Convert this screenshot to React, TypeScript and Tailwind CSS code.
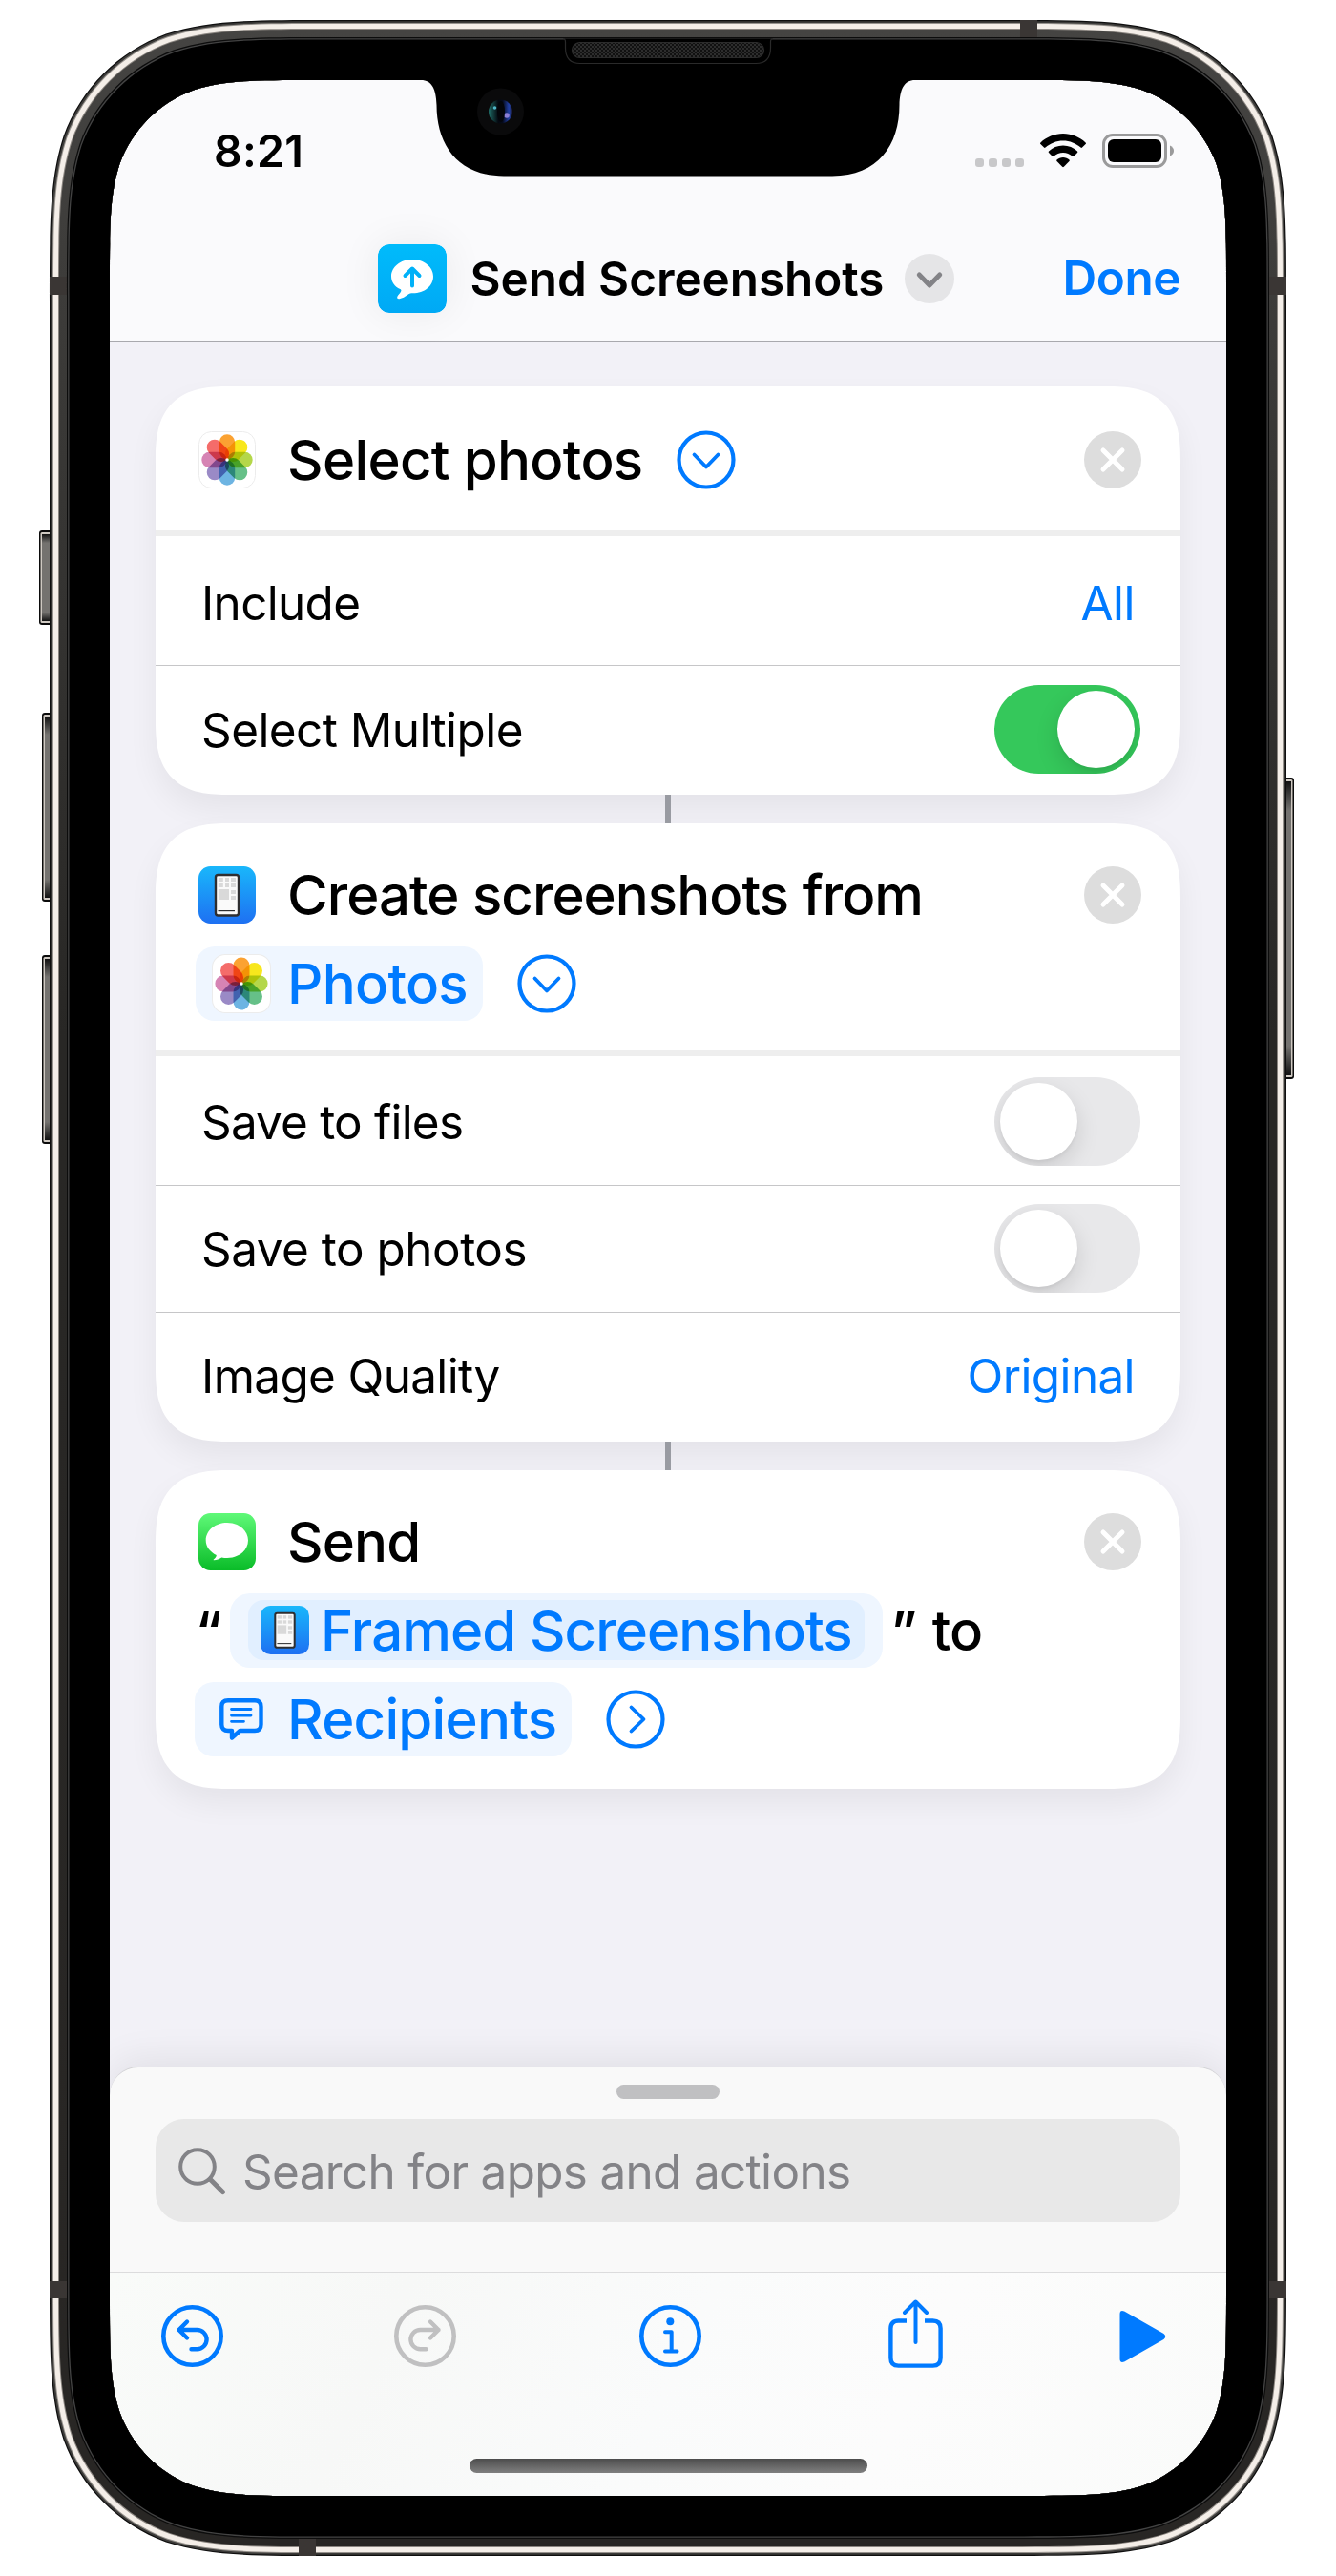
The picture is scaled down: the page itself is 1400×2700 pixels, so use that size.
import type { ReactNode } from "react";

const BLUE = "#007aff";

/* Path of a rectangle with continuous-curvature corners. */
function smoothRect(x: number, y: number, w: number, h: number, r: number) {
  const a: [number, number][] = [
    [1.52866, 0], [1.08849, 0], [0.86841, 0], [0.63149, 0.07491], [0.37282, 0.16906],
    [0.16906, 0.37282], [0.07491, 0.63149], [0, 0.86841], [0, 1.08849], [0, 1.52866],
  ];
  const b = [...a].reverse();
  const at = (p: [number, number], sx: number, sy: number) =>
    `${(sx > 0 ? x + p[0] * r : x + w - p[0] * r).toFixed(2)} ${(sy > 0 ? y + p[1] * r : y + h - p[1] * r).toFixed(2)}`;
  const corner = (pts: [number, number][], sx: number, sy: number) => {
    const s = pts.map((p) => at(p, sx, sy));
    return `L${s[0]} C${s[1]} ${s[2]} ${s[3]} C${s[4]} ${s[5]} ${s[6]} C${s[7]} ${s[8]} ${s[9]}`;
  };
  return `M${at(a[0], 1, 1)} ${corner(a, -1, 1)} ${corner(b, -1, -1)} ${corner(a, 1, -1)} ${corner(b, 1, 1)} Z`;
}

const SCREEN = smoothRect(115, 84, 1170, 2532, 139);

function ring(offset: number) {
  return `${smoothRect(52 + offset, 21 + offset, 1296 - 2 * offset, 2658 - 2 * offset, 193 - offset * 0.857)} ${SCREEN}`;
}

function SideButton({ x, y, w, h, flip }: { x: number; y: number; w: number; h: number; flip?: boolean }) {
  return (
    <g transform={flip ? `translate(${x + w} ${y}) scale(-1 1)` : `translate(${x} ${y})`}>
      <rect width={w + 4} height={h} rx="3" fill="#0b0b0b" />
      <rect x="1.5" y="2" width={w} height={h - 4} rx="1.5" fill="#cfc9c2" />
      <rect x="3" y="4" width={w} height={h - 8} fill="url(#btn)" />
    </g>
  );
}

function PhoneFrame() {
  return (
    <svg className="absolute inset-0 pointer-events-none" width="1400" height="2700" viewBox="0 0 1400 2700" fillRule="evenodd">
      <defs>
        <linearGradient id="band" x1="0" y1="0" x2="0" y2="1">
          <stop offset="0" stopColor="#454442" />
          <stop offset="0.1" stopColor="#3d3c3a" />
          <stop offset="0.4" stopColor="#282725" />
          <stop offset="1" stopColor="#282624" />
        </linearGradient>
        <linearGradient id="btn" x1="0" y1="0" x2="0" y2="1">
          <stop offset="0" stopColor="#111" />
          <stop offset="0.1" stopColor="#74726f" />
          <stop offset="0.9" stopColor="#74726f" />
          <stop offset="1" stopColor="#111" />
        </linearGradient>
        <pattern id="mesh" width="4" height="4" patternUnits="userSpaceOnUse">
          <rect width="4" height="4" fill="#111" />
          <circle cx="1" cy="1" r="0.9" fill="#3a3a3a" />
          <circle cx="3" cy="3" r="0.9" fill="#3a3a3a" />
        </pattern>
        <linearGradient id="lens" x1="0" y1="0" x2="1" y2="0">
          <stop offset="0" stopColor="#1f6d68" />
          <stop offset="0.4" stopColor="#04080f" />
          <stop offset="0.6" stopColor="#050a1c" />
          <stop offset="0.85" stopColor="#2140a8" />
          <stop offset="1" stopColor="#1c1c3a" />
        </linearGradient>
      </defs>
      <SideButton x={41} y={556} w={11} h={99} />
      <SideButton x={44} y={747} w={8} h={198} />
      <SideButton x={44} y={1001} w={8} h={198} />
      <SideButton x={1348} y={815} w={8} h={316} flip />
      <path d={ring(0)} fill="#0e0e0e" />
      <path d={ring(1.2)} fill="#3c3b39" />
      <path d={ring(3)} fill="#96928d" />
      <path d={ring(4)} fill="#f4eee8" />
      <path d={ring(9)} fill="#8b8681" />
      <path d={ring(10)} fill="url(#band)" />
      <g fill="#3a3634">
        <rect x="52" y="290" width="18" height="19" />
        <rect x="1330" y="290" width="18" height="19" />
        <rect x="52" y="2391" width="18" height="18" />
        <rect x="1330" y="2391" width="18" height="18" />
        <rect x="1069" y="21" width="18" height="18" />
        <rect x="313" y="2661" width="18" height="18" />
      </g>
      <path d={ring(18)} fill="#0c0c0c" />
      <path d={ring(19.2)} fill="#434343" />
      <path d={ring(20.5)} fill="#000" />
      <path d="M436 80 V84 H441 C453 84 457 94 457.5 110 C457.5 152 480 184.5 528 184.5 H872 C920 184.5 942.5 152 942.5 110 C943 94 947 84 959 84 H964 V80 Z" fill="#000" />
      <path d="M590 40.500 Q592.500 40.500 592.500 44 V50 Q592.500 66.500 608 66.500 H792 Q807.500 66.500 807.500 50 V44 Q807.500 40.500 810 40.500" fill="#000" stroke="#2a2a2a" strokeWidth="1.2" />
      <rect x="599.500" y="44.500" width="201" height="16" rx="8" fill="url(#mesh)" stroke="#2c2c2c" strokeWidth="1.2" />
      <circle cx="524.500" cy="117" r="24.500" fill="#0a0a0b" />
      <circle cx="524.500" cy="117" r="12.500" fill="url(#lens)" />
      <circle cx="518.500" cy="113" r="1.800" fill="#4fb6c8" />
      <circle cx="531" cy="121" r="2.800" fill="#8c7fd6" />
      <ellipse cx="525" cy="117" rx="4" ry="11" fill="#03050a" />
    </svg>
  );
}

function Wifi() {
  return (
    <svg width="48" height="36" viewBox="0 0 48 36" fill="#000">
      <path d="M24 0 C33 0 41.500 3.600 47.600 9.400 Q48.400 10.200 47.600 11 L44 14.600 Q43.300 15.300 42.500 14.600 C37.500 10 31 7.400 24 7.400 C17 7.400 10.500 10 5.500 14.600 Q4.700 15.300 4 14.600 L0.400 11 Q-0.400 10.200 0.400 9.400 C6.500 3.600 15 0 24 0 Z" />
      <path d="M24 12.600 C29.800 12.600 35 14.800 39 18.500 Q39.800 19.300 39 20.100 L35.300 23.700 Q34.600 24.400 33.800 23.700 C31.100 21.400 27.700 20 24 20 C20.300 20 16.900 21.400 14.200 23.700 Q13.400 24.400 12.700 23.700 L9 20.100 Q8.200 19.300 9 18.500 C13 14.800 18.200 12.600 24 12.600 Z" />
      <path d="M24 25 C26.500 25 28.800 26 30.500 27.500 Q31.200 28.200 30.500 29 L24.800 34.800 Q24 35.600 23.200 34.800 L17.500 29 Q16.800 28.200 17.500 27.500 C19.200 26 21.500 25 24 25 Z" />
    </svg>
  );
}

function Battery() {
  return (
    <svg width="76" height="36" viewBox="0 0 76 36">
      <rect x="1.500" y="1.500" width="65" height="33" rx="9.500" fill="none" stroke="#9a9a9b" strokeWidth="3" />
      <rect x="6" y="6" width="56" height="24" rx="6" fill="#000" />
      <path d="M71 12.500 Q75 14.500 75 18 Q75 21.500 71 23.500 Z" fill="#9a9a9b" />
    </svg>
  );
}

function ShortcutIcon() {
  return (
    <svg className="rounded-[12px] shadow-[0_0_44px_rgba(0,0,0,0.07)]" width="72" height="72" viewBox="0 0 72 72">
      <defs>
        <linearGradient id="sc" x1="0" y1="0" x2="0" y2="1">
          <stop offset="0" stopColor="#00bbfb" />
          <stop offset="1" stopColor="#00a9f5" />
        </linearGradient>
      </defs>
      <rect width="72" height="72" rx="12" fill="url(#sc)" />
      <path d="M36 16 C48.500 16 58 23.800 58 33.700 C58 43.800 48.500 51.400 36.500 51.300 C34.600 51.300 33.200 51.600 31.500 52.800 C28.500 55 25.500 56.800 22.500 57.200 C20 57.400 19.600 55.600 20.800 54 C22.500 52 24 50.600 24.400 48.800 C24.600 48 24 47.600 23.300 47.100 C17.500 44.200 14 39.500 14 33.700 C14 23.800 23.500 16 36 16 Z" fill="#fff" />
      <path d="M36 43.500 V26 M28.500 33 L36 25.500 L43.500 33" fill="none" stroke="#00b1f8" strokeWidth="4" strokeLinecap="round" strokeLinejoin="round" />
    </svg>
  );
}

const PETALS = ["#fba232", "#f8e71c", "#b4d74a", "#66c088", "#6db4e2", "#9a8ac6", "#d684b4", "#f46c6a"];

function PhotosIcon({ size }: { size: number }) {
  return (
    <svg width={size} height={size} viewBox="0 0 60 60">
      <rect x="0.5" y="0.5" width="59" height="59" rx="13" fill="#fff" stroke="#ececec" />
      <g className="isolate">
        {PETALS.map((c, i) => (
          <rect key={c} className="mix-blend-multiply" x="21.800" y="3.300" width="16.400" height="26.200" rx="8.200" fill={c} transform={`rotate(${i * 45} 30 30)`} />
        ))}
      </g>
      <circle cx="30" cy="30" r="1.700" fill="#fff" />
    </svg>
  );
}

function DeviceIcon({ size }: { size: number }) {
  return (
    <svg width={size} height={size} viewBox="0 0 60 60">
      <defs>
        <linearGradient id="dev" x1="0" y1="0" x2="0" y2="1">
          <stop offset="0" stopColor="#19b7fb" />
          <stop offset="1" stopColor="#1e70f2" />
        </linearGradient>
      </defs>
      <rect width="60" height="60" rx="12.500" fill="url(#dev)" />
      <rect x="18" y="9" width="24" height="42.500" rx="2.500" fill="#fafafa" stroke="#2e2e30" strokeWidth="2.400" />
      <g fill="#d9d9d9">
        <rect x="20.800" y="12" width="5" height="4" />
        <rect x="28" y="12" width="4" height="4" />
        <rect x="34" y="12" width="5" height="4" />
        <rect x="20.800" y="18" width="5" height="4" />
        <rect x="28" y="18" width="4" height="4" />
        <rect x="34" y="18" width="5" height="4" />
        <rect x="20.800" y="24" width="11.200" height="11" />
        <rect x="34" y="25" width="5" height="4" />
        <rect x="34" y="31" width="5" height="4" />
      </g>
      <rect x="20.500" y="46" width="17.500" height="1.200" fill="#2e2e30" />
    </svg>
  );
}

function MessagesIcon() {
  return (
    <svg width="60" height="60" viewBox="0 0 60 60">
      <defs>
        <linearGradient id="msg" x1="0" y1="0" x2="0" y2="1">
          <stop offset="0" stopColor="#5ff978" />
          <stop offset="1" stopColor="#0abc28" />
        </linearGradient>
      </defs>
      <rect width="60" height="60" rx="12.500" fill="url(#msg)" />
      <path d="M30 10 C42.300 10 52 18 52 28.500 C52 39 42.300 47 30 47 C28 47 26 46.800 24.300 46.400 C22 48 19 49.200 16.200 49.200 C15.400 49.200 15.600 48.600 16.200 48.200 C17.800 47 18.700 45.800 18.800 44 C12 40.700 7.700 35 7.700 28.500 C7.700 18 17.700 10 30 10 Z" fill="#fff" />
    </svg>
  );
}

function CircleChevron({ right }: { right?: boolean }) {
  return (
    <svg width="62" height="62" viewBox="0 0 62 62" fill="none" stroke={BLUE} strokeLinecap="round" strokeLinejoin="round">
      <circle cx="31" cy="31" r="28.500" strokeWidth="4.200" />
      <path d={right ? "M26.5 18.5 L39.500 31 L26.500 43.500" : "M18.500 25.500 L31 38.500 L43.500 25.500"} strokeWidth="3.800" />
    </svg>
  );
}

function CloseBadge() {
  return (
    <svg className="ml-auto mr-[41px] shrink-0" width="60" height="60" viewBox="0 0 60 60">
      <circle cx="30" cy="30" r="30" fill="#dddddd" />
      <path d="M20 20 L40 40 M40 20 L20 40" stroke="#fff" strokeWidth="5" strokeLinecap="round" />
    </svg>
  );
}

function Toggle({ on }: { on?: boolean }) {
  return (
    <div className={`flex items-center overflow-hidden w-[153px] h-[93px] px-[6px] mr-[-6px] rounded-full ${on ? "bg-[#35c85b] justify-end" : "bg-[#e8e8ea] justify-start"}`}>
      <div className="size-[81px] rounded-full bg-white shadow-[0_9px_24px_rgba(0,0,0,0.13),0_3px_3px_rgba(0,0,0,0.04)]" />
    </div>
  );
}

function Card({ children }: { children: ReactNode }) {
  return (
    <section className="overflow-hidden bg-white rounded-[60px] supports-[corner-shape:squircle]:rounded-[78px] [corner-shape:superellipse(1.44)] shadow-[0_15px_32px_rgba(0,0,0,0.06)]">
      {children}
    </section>
  );
}

function Row({ label, tracking, height, children, divider = true }: { label: string; tracking: string; height: string; children: ReactNode; divider?: boolean }) {
  return (
    <div className={`flex items-center justify-between pl-[48px] pr-[48px] text-[49.4px] ${height} ${divider ? "border-b border-[#c6c6c8]" : ""}`}>
      <span className={`pt-[1px] ${tracking}`}>{label}</span>
      {children}
    </div>
  );
}

function Line({ children }: { children: ReactNode }) {
  return <div className="flex items-center h-[93px] text-[58.2px] leading-none font-medium whitespace-pre">{children}</div>;
}

function Connector() {
  return <div className="relative mx-auto w-[6px] h-[30px] bg-[#999ba2]" />;
}

export default function App() {
  return (
    <div className="relative w-[1400px] h-[2700px] overflow-hidden bg-white pt-[84px] pl-[115px] font-['Inter',sans-serif] text-black">
      <main className="flex flex-col w-[1170px] h-[2532px] bg-[#f2f1f7]">
        <header className="h-[274px] bg-[#fafafc] border-b border-[#a9a9ae]">
          <div className="flex items-center h-[148px] pl-[109px] pr-[54px]">
            <span className="pt-[1px] text-[46.5px] leading-none font-semibold tracking-[0.25px]">8:21</span>
            <div className="ml-auto flex gap-[5px] mr-[17px] mt-[25px]">
              <i className="size-[9px] rounded-[3px] bg-[#c8c8ca]" />
              <i className="size-[9px] rounded-[3px] bg-[#c8c8ca]" />
              <i className="size-[9px] rounded-[3px] bg-[#c8c8ca]" />
              <i className="size-[9px] rounded-[3px] bg-[#c8c8ca]" />
            </div>
            <div className="flex gap-[17px]">
              <Wifi />
              <Battery />
            </div>
          </div>
          <div className="flex items-center h-[120px] pl-[281px] pr-[48px] text-[49.4px] leading-none font-semibold">
            <ShortcutIcon />
            <h1 className="ml-[24.5px] pt-[1px] tracking-[-0.04px]">Send Screenshots</h1>
            <svg className="ml-[22px]" width="52" height="52" viewBox="0 0 52 52">
              <circle cx="26" cy="26" r="26" fill="#e5e5e7" />
              <path d="M15.300 22 L26 33 L36.700 22" fill="none" stroke="#838387" strokeWidth="5" strokeLinecap="round" strokeLinejoin="round" />
            </svg>
            <span className="ml-auto text-[#007aff] tracking-[-0.42px]">Done</span>
          </div>
        </header>

        <div className="h-[1808px] px-[48px] pt-[47px]">
          <Card>
            <div className="h-[157px] pt-[30px] pl-[45px] border-b-[6px] border-[#eeeeee]">
              <Line>
                <PhotosIcon size={60} />
                <span className="ml-[33px] mr-[35px] pt-[1px] tracking-[-0.68px]">Select photos</span>
                <CircleChevron />
                <CloseBadge />
              </Line>
            </div>
            <Row label="Include" tracking="tracking-[-0.65px]" height="h-[136px] pt-[4px]">
              <span className="pt-[1px] text-[#007aff] tracking-[-0.5px]">All</span>
            </Row>
            <Row label="Select Multiple" tracking="tracking-[-0.55px]" height="h-[135px] pb-[2px]" divider={false}>
              <Toggle on />
            </Row>
          </Card>
          <Connector />
          <Card>
            <div className="h-[244px] pt-[28px] border-b-[6px] border-[#eeeeee]">
              <div className="pl-[45px]">
                <Line>
                  <DeviceIcon size={60} />
                  <span className="ml-[33px] pt-[1px] tracking-[-0.97px]">Create screenshots from</span>
                  <CloseBadge />
                </Line>
              </div>
              <div className="pl-[42px]">
                <Line>
                  <div className="flex items-center h-[78px] pl-[17px] pr-[16px] rounded-[20px] bg-[#eff6ff] text-[#007aff]">
                    <PhotosIcon size={62} />
                    <span className="ml-[17px] pt-[1px] tracking-[-0.7px]">Photos</span>
                  </div>
                  <div className="ml-[36px]">
                    <CircleChevron />
                  </div>
                </Line>
              </div>
            </div>
            <Row label="Save to files" tracking="tracking-[-0.79px]" height="h-[136px] pt-[2px]">
              <Toggle />
            </Row>
            <Row label="Save to photos" tracking="tracking-[-0.48px]" height="h-[133px] pb-[1px]">
              <Toggle />
            </Row>
            <Row label="Image Quality" tracking="tracking-[-0.62px]" height="h-[135px] pb-[4px]" divider={false}>
              <span className="pt-[1px] text-[#007aff] tracking-[-0.6px]">Original</span>
            </Row>
          </Card>
          <Connector />
          <Card>
            <div className="h-[334px] pt-[28px]">
              <div className="pl-[45px]">
                <Line>
                  <MessagesIcon />
                  <span className="ml-[33px] pt-[1px] tracking-[-0.86px]">Send</span>
                  <CloseBadge />
                </Line>
              </div>
              <div className="pl-[42px]">
                <Line>
                  <span className="w-[36px] text-[54px] font-semibold">“</span>
                  <div className="flex items-center h-[78px] px-[19px] rounded-[21px] bg-[#eff6ff] text-[#007aff]">
                    <div className="flex items-center h-[63px] px-[13px] rounded-[16px] bg-[#e1efff]">
                      <DeviceIcon size={51} />
                      <span className="ml-[12px] pt-[1px] tracking-[-0.93px]">Framed Screenshots</span>
                    </div>
                  </div>
                  <span className="ml-[9px] w-[43px] text-[54px] font-semibold">”</span>
                  <span className="pt-[1px] tracking-[-0.93px]">to</span>
                </Line>
              </div>
              <div className="pl-[41px]">
                <Line>
                  <div className="flex items-center h-[78px] pl-[26px] pr-[16px] rounded-[20px] bg-[#eff6ff] text-[#007aff]">
                    <svg width="46" height="46" viewBox="0 0 46 46" fill="none" stroke={BLUE} strokeWidth="4.400" strokeLinecap="round" strokeLinejoin="round">
                      <path d="M9 3.200 H37 Q43.500 3.200 43.500 9.700 V28.500 Q43.500 35 37 35 H21.500 L13 42.500 V35 H9 Q2.300 35 2.300 28.500 V9.700 Q2.300 3.200 9 3.200 Z" />
                      <path d="M12.500 12.500 H33 M12.500 19 H33 M12.500 25.300 H25.500" strokeWidth="2.800" />
                    </svg>
                    <span className="ml-[25px] pt-[1px] tracking-[-0.75px]">Recipients</span>
                  </div>
                  <div className="ml-[36px]">
                    <CircleChevron right />
                  </div>
                </Line>
              </div>
            </div>
          </Card>
        </div>

        <div className="h-[215px] px-[48px] pt-[18px] rounded-t-[30px] border-t border-[#d3d3d6] bg-[#f9f9f9] shadow-[0_-6px_40px_rgba(0,0,0,0.08)]">
          <div className="mx-auto w-[108px] h-[15px] rounded-full bg-[#c0c0c2]" />
          <div className="flex items-center mt-[21px] h-[108px] pl-[23px] rounded-[30px] bg-[#e8e8e8] text-[#838387] text-[49.4px] tracking-[-0.65px]">
            <svg width="52" height="52" viewBox="0 0 52 52" fill="none" stroke="#838387" strokeLinecap="round">
              <circle cx="21" cy="22" r="17.800" strokeWidth="4" />
              <path d="M34.500 35.500 L47.500 48.500" strokeWidth="5" />
            </svg>
            <span className="ml-[16px] mt-[2px]">Search for apps and actions</span>
          </div>
        </div>

        <footer className="flex-1 flex flex-col border-t border-[#dcdcdd] bg-[linear-gradient(115deg,#f9fbf9_0%,#f7f8f7_25%,#fafbfb_50%,#fcfcfc_70%,#fafbfa_100%)]">
          <div className="flex items-center h-[133px] pl-[54px]">
            <svg width="65" height="65" viewBox="0 0 65 65" fill="none" stroke={BLUE} strokeWidth="4.400" strokeLinecap="round" strokeLinejoin="round">
              <circle cx="32.500" cy="32.500" r="30.200" strokeWidth="4.600" />
              <path d="M27 17.500 L18.500 26 L27 34.500 M18.500 26 H37.500 A10 10 0 0 1 37.500 46.200 H31.500" />
            </svg>
            <svg className="ml-[179px]" width="65" height="65" viewBox="0 0 65 65" fill="none" stroke="#c0c0c1" strokeWidth="4.400" strokeLinecap="round" strokeLinejoin="round">
              <circle cx="32.500" cy="32.500" r="30.200" strokeWidth="4.600" />
              <path d="M38 17.500 L46.500 26 L38 34.500 M46.500 26 H27.500 A10 10 0 0 0 27.500 46.200 H33.500" />
            </svg>
            <svg className="ml-[192px]" width="65" height="65" viewBox="0 0 65 65" fill="none" stroke={BLUE} strokeWidth="4.400" strokeLinecap="round" strokeLinejoin="round">
              <circle cx="32.500" cy="32.500" r="30.200" strokeWidth="4.600" />
              <path d="M27 28.300 H33.700 V48 M27 48.500 H39.500" strokeWidth="4" />
              <circle cx="32.300" cy="17.200" r="4" fill={BLUE} stroke="none" />
            </svg>
            <svg className="ml-[196px] mb-[5px]" width="57" height="72" viewBox="0 0 57 72" fill="none" stroke={BLUE} strokeWidth="4.400" strokeLinecap="round" strokeLinejoin="round">
              <path d="M19 22.500 H10.500 Q2.400 22.500 2.400 30.500 V61.500 Q2.400 69.600 10.500 69.600 H46.500 Q54.600 69.600 54.600 61.500 V30.500 Q54.600 22.500 46.500 22.500 H38" strokeLinecap="butt" />
              <path d="M28.500 45 V3 M17 14 L28.500 2.500 L40 14" strokeWidth="4" />
            </svg>
            <svg className="ml-[185px]" width="50" height="56" viewBox="0 0 50 56" fill={BLUE}>
              <path d="M0.500 4.500 Q0.500 0.500 4 1.200 Q5 1.400 6.500 2.300 L46.500 25 Q50 28 46.500 31 L6.500 53.700 Q5 54.600 4 54.800 Q0.500 55.500 0.500 51.500 Z" />
            </svg>
          </div>
          <div className="mx-auto mt-[62px] w-[417px] h-[15px] rounded-full bg-[linear-gradient(180deg,#4c4c4c,#808080)]" />
        </footer>
      </main>
      <PhoneFrame />
    </div>
  );
}
